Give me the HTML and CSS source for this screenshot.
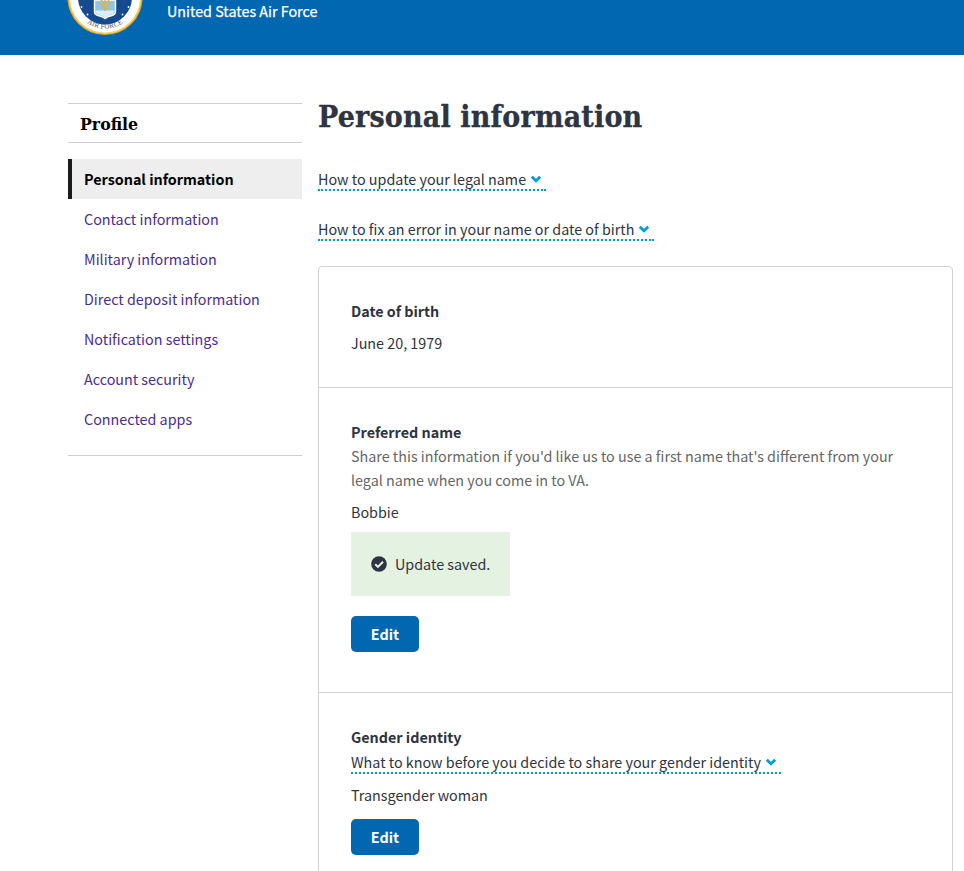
FILE: index.html
```html
<!DOCTYPE html>
<html lang="en">
<head>
<meta charset="utf-8">
<title>Personal information</title>
<link rel="stylesheet" href="styles.css">
</head>
<body>
<header class="banner">
  <svg class="seal" width="76" height="38" viewBox="0 0 76 38">
    <circle cx="38" cy="-2.5" r="37.600" fill="#d9a62b"/>
    <circle cx="38" cy="-2.5" r="36.400" fill="#f6d365"/>
    <circle cx="38" cy="-2.5" r="35" fill="#fff"/>
    <circle cx="38" cy="-2.5" r="27" fill="#164a8f"/>
    <path d="M27.500 0H48.500V12Q48.500 14.500 45 15.500Q40 16.500 38 18.500Q36 16.500 31 15.500Q27.500 14.500 27.500 12Z" fill="#8fc6e8" stroke="#fff" stroke-width="1.400"/>
    <path d="M28.500 10.500H47.500V12Q47 14 43 15L38 17.200L33 15Q29 14 28.500 12Z" fill="#dceefa"/>
    <path d="M38 0V11M34 0L38 5L42 0M32 3L38 7L44 3M34 9L38 7L42 9" fill="none" stroke="#d9b44a" stroke-width="1.300"/>
    <g fill="#fff"><circle cx="14.500" cy="7" r=".9"/><circle cx="20.500" cy="14.500" r=".9"/><circle cx="55.500" cy="14.500" r=".9"/><circle cx="61.500" cy="7" r=".9"/></g>
    <path id="arc" d="M8.500 8.700A31.800 31.800 0 0 0 67.500 8.700" fill="none"/>
    <text class="motto"><textPath href="#arc" startOffset="50%" text-anchor="middle">AIR FORCE</textPath></text>
  </svg>
  <div class="person">
    <div class="person-name">g</div>
    <div class="branch">United States Air Force</div>
  </div>
</header>
<div class="layout">
  <nav class="sidebar">
    <h2 class="side-title">Profile</h2>
    <ul class="links">
      <li class="link current">Personal information</li>
      <li class="link">Contact information</li>
      <li class="link">Military information</li>
      <li class="link">Direct deposit information</li>
      <li class="link">Notification settings</li>
      <li class="link">Account security</li>
      <li class="link">Connected apps</li>
    </ul>
  </nav>
  <main class="main">
    <h1 class="title">Personal information</h1>
    <div class="help"><span class="more">How to update your legal name<svg class="chev" viewBox="0 0 12 8"><path d="M1.800 1.800L6 5.800L10.200 1.800"/></svg></span></div>
    <div class="help"><span class="more">How to fix an error in your name or date of birth<svg class="chev" viewBox="0 0 12 8"><path d="M1.800 1.800L6 5.800L10.200 1.800"/></svg></span></div>
    <div class="card">
      <section class="row birth">
        <h3 class="label">Date of birth</h3>
        <p class="value">June 20, 1979</p>
      </section>
      <section class="row name">
        <h3 class="label">Preferred name</h3>
        <p class="hint">Share this information if you'd like us to use a first name that's different from your<br>legal name when you come in to VA.</p>
        <p class="value">Bobbie</p>
        <div class="alert"><svg class="tick" viewBox="0 0 16 16"><circle cx="8" cy="8" r="7.800"/><path d="M4.200 8.300L6.900 10.900L12 5.800"/></svg>Update saved.</div>
        <button class="edit">Edit</button>
      </section>
      <section class="row gender">
        <h3 class="label">Gender identity</h3>
        <span class="more">What to know before you decide to share your gender identity<svg class="chev" viewBox="0 0 12 8"><path d="M1.800 1.800L6 5.800L10.200 1.800"/></svg></span>
        <p class="value">Transgender woman</p>
        <button class="edit">Edit</button>
      </section>
    </div>
  </main>
</div>
</body>
</html>
```

FILE: styles.css
```css
* { box-sizing: border-box; }
html, body { height: 871px; overflow: hidden; }
body {
  margin: 0;
  background: #fff;
  color: #2e3440;
  font-family: "Noto Sans CJK JP", "Noto Sans", sans-serif;
  font-size: 14.33px;
  line-height: 24px;
}
h1, h2, h3, p, ul { margin: 0; padding: 0; }
.banner {
  display: flex;
  height: 55px;
  padding-left: 67.400px;
  background: #0067b0;
  color: #fff;
  overflow: hidden;
}
.seal { flex: none; }
.motto { font: 7px "Liberation Serif", serif; fill: #555; letter-spacing: .2px; }
.person { margin-left: 23.600px; }
.person-name { height: 24px; margin-top: -25px; padding-left: 44px; font-size: 17px; font-weight: 700; line-height: 28px; }
.branch { -webkit-text-stroke: .25px #fff; }
.layout { display: flex; gap: 16px; padding-left: 68px; }
.sidebar { width: 234px; height: 353px; margin-top: 48px; border-bottom: 1px solid #d0d0d0; }
.side-title {
  height: 40px;
  padding-left: 12px;
  border: solid #d0d0d0;
  border-width: 1px 0;
  color: #000;
  font: bold 17.500px/40px "DejaVu Serif Condensed", "DejaVu Serif", serif;
}
.links { margin-top: 16px; list-style: none; }
.link { height: 40px; padding-left: 16px; line-height: 40px; color: #4c2c92; }
.current { padding-left: 12px; border-left: 4px solid #1b1b1b; background: #eee; color: #000; font-weight: 700; }
.main { width: 635px; }
.title {
  height: 40px;
  margin: 41px 0 32px;
  font: bold 30px/42px "DejaVu Serif Condensed", "DejaVu Serif", serif;
  letter-spacing: .17px;
  -webkit-text-stroke: .3px #2e3440;
}
.help { height: 50px; }
.more { display: block; width: fit-content; height: 23px; padding-right: 4px; border-bottom: 2px dotted #009dcf; line-height: 22px; white-space: nowrap; }
.chev { width: 12px; height: 8px; margin-left: 4px; vertical-align: 2px; fill: none; stroke: #009dcf; stroke-width: 2.800; }
.card { height: 640px; margin-top: -2px; border: 1px solid #cfd1d4; border-radius: 4px; }
.row { padding: 32px 32px 0; border-bottom: 1px solid #cfd1d4; }
.birth { height: 121px; }
.name { height: 305px; }
.row.gender { border: 0; }
.label { font-size: 14.33px; line-height: 24px; font-weight: 700; }
.value { margin-top: 8px; }
.hint { color: #666; white-space: nowrap; }
.alert { display: flex; align-items: center; width: 159px; height: 64px; margin-top: 8px; padding-left: 20px; background: #e4f2e1; white-space: nowrap; }
.tick { width: 16px; height: 16px; margin-right: 8px; fill: #2e3440; }
.tick path { fill: none; stroke: #e4f2e1; stroke-width: 2; }
.edit {
  display: block;
  width: 68px;
  height: 36px;
  margin-top: 20px;
  padding: 0;
  border: 0;
  border-radius: 5px;
  background: #0067b0;
  color: #fff;
  font: bold 14.4px/36px "Noto Sans CJK JP", sans-serif;
}
.gender .more { margin-top: 2px; }
.gender .value { margin-top: 9px; }
.gender .edit { margin-top: 12px; }
```
